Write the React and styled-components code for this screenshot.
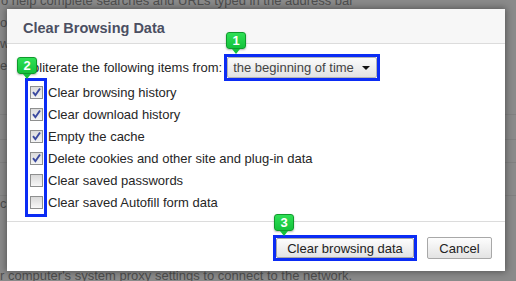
import React from 'react';
import styled, { createGlobalStyle } from 'styled-components';

const Global = createGlobalStyle`
  html, body { margin: 0; padding: 0; }
  body {
    width: 516px;
    height: 281px;
    overflow: hidden;
    background: #8a8a8a;
    font-family: "Liberation Sans", Arial, sans-serif;
  }
`;

const Page = styled.div`
  position: relative;
  width: 516px;
  height: 281px;
  overflow: hidden;
  background: #8a8a8a;
`;

const Backdrop = styled.div`
  display: flex;
  flex-direction: column;
  margin-top: -7px;
`;

const BackRow = styled.div`
  height: ${(p) => p.$h}px;
  box-sizing: border-box;
  font-size: 13px;
  line-height: 15px;
  color: #4e4e4e;
  white-space: nowrap;
  padding-left: ${(p) => p.$indent || 0}px;
  border-bottom: ${(p) => (p.$rule ? '1px solid rgba(0,0,0,0.07)' : 'none')};
`;

const Dialog = styled.div`
  position: absolute;
  left: 7px;
  top: 9px;
  width: 498px;
  height: 262px;
  background: #fff;
  display: flex;
  flex-direction: column;
  box-shadow: 0 0 7px 1px rgba(0, 0, 0, 0.38);
`;

const Header = styled.div`
  height: 35px;
  box-sizing: border-box;
  background: #f7f7f7;
  border-bottom: 1px solid #dcdcdc;
  padding: 11px 0 0 16px;
`;

const Title = styled.h1`
  margin: 0;
  font-size: 14.5px;
  line-height: 17px;
  font-weight: bold;
  color: #4b4f62;
`;

const Body = styled.div`
  flex: 1;
  padding: 10px 0 0 15px;
`;

const FromRow = styled.div`
  display: flex;
  align-items: center;
  gap: 2px;
  height: 27px;
`;

const Label = styled.span`
  font-size: 13px;
  line-height: 15px;
  color: #262626;
  white-space: nowrap;
`;

const Annotated = styled.div`
  position: relative;
  border: 3px solid #0b2cf4;
  display: flex;
`;

const Select = styled.div`
  width: 150px;
  height: 21px;
  box-sizing: border-box;
  border: 1px solid #b4b4b4;
  border-radius: 2px;
  background: linear-gradient(#fbfbfb, #e2e2e2);
  display: flex;
  align-items: center;
  justify-content: space-between;
  padding: 0 6px 0 5px;
  font-size: 13px;
  color: #444;
`;

const Arrow = styled.span`
  width: 0;
  height: 0;
  border-left: 4px solid transparent;
  border-right: 4px solid transparent;
  border-top: 4px solid #111;
  margin-top: 1px;
`;

const Badge = styled.div`
  position: absolute;
  left: ${(p) => p.$x}px;
  top: ${(p) => p.$y}px;
  width: 20px;
  height: 17px;
  box-sizing: border-box;
  background: linear-gradient(#2fe055, #15c23c);
  border: 1px solid #0f9a2c;
  border-radius: 3px;
  color: #fff;
  font-weight: bold;
  font-size: 13px;
  line-height: 15px;
  text-align: center;
  box-shadow: 0 1px 2px rgba(0,0,0,0.3);
  z-index: 2;
  &::after {
    content: '';
    position: absolute;
    left: 5px;
    bottom: -6px;
    border-left: 4px solid transparent;
    border-right: 4px solid transparent;
    border-top: 5px solid #15c23c;
  }
`;

const List = styled.div`
  position: relative;
  display: flex;
  flex-direction: column;
  padding-left: 8px;
`;

const ListFrame = styled.div`
  position: absolute;
  left: 3px;
  top: -3px;
  width: 22px;
  height: 139px;
  box-sizing: border-box;
  border: 3px solid #0b2cf4;
`;

const Item = styled.label`
  display: flex;
  align-items: center;
  gap: 5px;
  height: 22px;
`;

const Box = styled.span`
  width: 13px;
  height: 13px;
  box-sizing: border-box;
  border: 1px solid #8e8f8f;
  background: ${(p) => (p.$on ? 'linear-gradient(#dcdcdc, #f4f4f4)' : 'linear-gradient(#d9d9d9, #f7f7f7)')};
  display: flex;
  align-items: center;
  justify-content: center;
`;

const Footer = styled.div`
  height: 50px;
  box-sizing: border-box;
  border-top: 1px solid #dcdcdc;
  display: flex;
  justify-content: flex-end;
  align-items: center;
  gap: 10px;
  padding: 3px 13px 0 0;
`;

const Button = styled.button`
  height: ${(p) => p.$h}px;
  width: ${(p) => p.$w}px;
  box-sizing: border-box;
  border: 1px solid #a8a8a8;
  border-radius: 2px;
  background: linear-gradient(#fdfdfd, #e3e3e3);
  font-family: "Liberation Sans", Arial, sans-serif;
  font-size: 13px;
  color: #222;
  padding: 0;
`;

const Check = () => (
  <svg width="11" height="11" viewBox="0 0 11 11">
    <path d="M2 5.2 L4.4 8.2 L9 1.5" fill="none" stroke="#3b4aa0" strokeWidth="1.9" />
  </svg>
);

const items = [
  ['Clear browsing history', true],
  ['Clear download history', true],
  ['Empty the cache', true],
  ['Delete cookies and other site and plug-in data', true],
  ['Clear saved passwords', false],
  ['Clear saved Autofill form data', false],
];

export default function App() {
  return (
    <Page>
      <Global />
      <Backdrop>
        <BackRow $h={22} $indent={1}>o help complete searches and URLs typed in the address bar</BackRow>
        <BackRow $h={21}>o</BackRow>
        <BackRow $h={22}>w</BackRow>
        <BackRow $h={57} $rule>e</BackRow>
        <BackRow $h={25} $rule />
        <BackRow $h={23} $rule />
        <BackRow $h={33} $rule />
        <BackRow $h={72}>cl</BackRow>
        <BackRow $h={16}>r computer's system proxy settings to connect to the network.</BackRow>
      </Backdrop>
      <Dialog>
        <Header>
          <Title>Clear Browsing Data</Title>
        </Header>
        <Body>
          <FromRow>
            <Label>Obliterate the following items from:</Label>
            <Annotated>
              <Badge $x={-1} $y={-25}>1</Badge>
              <Select>
                <span>the beginning of time</span>
                <Arrow />
              </Select>
            </Annotated>
          </FromRow>
          <List>
            <Badge $x={-5} $y={-24}>2</Badge>
            <ListFrame />
            {items.map(([text, on]) => (
              <Item key={text}>
                <Box $on={on}>{on && <Check />}</Box>
                <Label>{text}</Label>
              </Item>
            ))}
          </List>
        </Body>
        <Footer>
          <Annotated>
            <Badge $x={-2} $y={-24}>3</Badge>
            <Button $w={138} $h={20}>Clear browsing data</Button>
          </Annotated>
          <Button $w={65} $h={22}>Cancel</Button>
        </Footer>
      </Dialog>
    </Page>
  );
}
